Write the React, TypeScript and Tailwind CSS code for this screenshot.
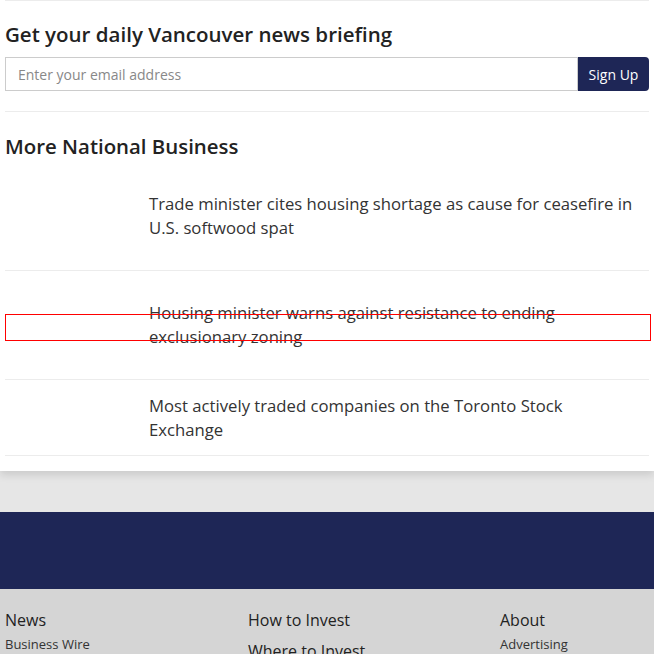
export default function App() {
  const stories = [
    { title: "Trade minister cites housing shortage as cause for ceasefire in U.S. softwood spat", pad: "pt-[30px] pb-[30px]" },
    { title: "Housing minister warns against resistance to ending exclusionary zoning", pad: "pt-[30px] pb-[30px]" },
    { title: "Most actively traded companies on the Toronto Stock Exchange", pad: "pt-[14px] pb-[13px]" },
  ];

  return (
    <div className="relative min-h-[654px] bg-[#e6e6e6] font-['Open_Sans',sans-serif] text-[#333]">
      <div className="bg-white px-[5px] pb-[15px] shadow-[0_4px_8px_rgba(0,0,0,0.12)]">
        <div className="border-t border-[#ececec] pt-[19px]">
          <h2 className="text-[20.5px] font-semibold leading-[28px] text-[#222]">
            Get your daily Vancouver news briefing
          </h2>
          <div className="mt-[9px] flex h-[34px]">
            <input
              type="text"
              placeholder="Enter your email address"
              className="flex-1 border border-[#ccc] px-3 text-[14px] text-[#333] placeholder:text-[#888] outline-none"
            />
            <button className="w-[71px] rounded-r-[4px] bg-[#1e2656] text-[14px] font-medium text-white">
              Sign Up
            </button>
          </div>
        </div>

        <div className="mt-[20px] border-t border-[#ececec] pt-[21px]">
          <h2 className="text-[20.4px] font-semibold leading-[26px] text-[#222]">More National Business</h2>
          <div className="mt-[3px]">
            {stories.map((s) => (
              <div key={s.title} className={`flex border-b border-[#ececec] ${s.pad}`}>
                <div className="w-[144px] shrink-0" />
                <p className="max-w-[488px] text-[16.7px] leading-[24px] text-[#333]">{s.title}</p>
              </div>
            ))}
          </div>
        </div>
      </div>

      <div className="h-[41px]" />
      <div className="h-[77px] bg-[#1e2656]" />

      <div className="grid grid-cols-[243px_252px_1fr] bg-[#d5d5d5] px-[5px] pt-[20px] pb-[20px]">
        <div>
          <h3 className="text-[16px] font-medium leading-[22px] text-[#222]">News</h3>
          <p className="mt-[4px] text-[13px] leading-[18px] text-[#333]">Business Wire</p>
        </div>
        <div>
          <h3 className="text-[16px] font-medium leading-[22px] text-[#222]">How to Invest</h3>
          <p className="mt-[9px] text-[16px] font-medium leading-[22px] text-[#222]">Where to Invest</p>
        </div>
        <div>
          <h3 className="text-[16px] font-medium leading-[22px] text-[#222]">About</h3>
          <p className="mt-[4px] text-[13px] leading-[18px] text-[#333]">Advertising</p>
        </div>
      </div>

      <div className="pointer-events-none absolute left-[5px] top-[314px] h-[27px] w-[646px] border border-[#ff0000]" />
    </div>
  );
}
